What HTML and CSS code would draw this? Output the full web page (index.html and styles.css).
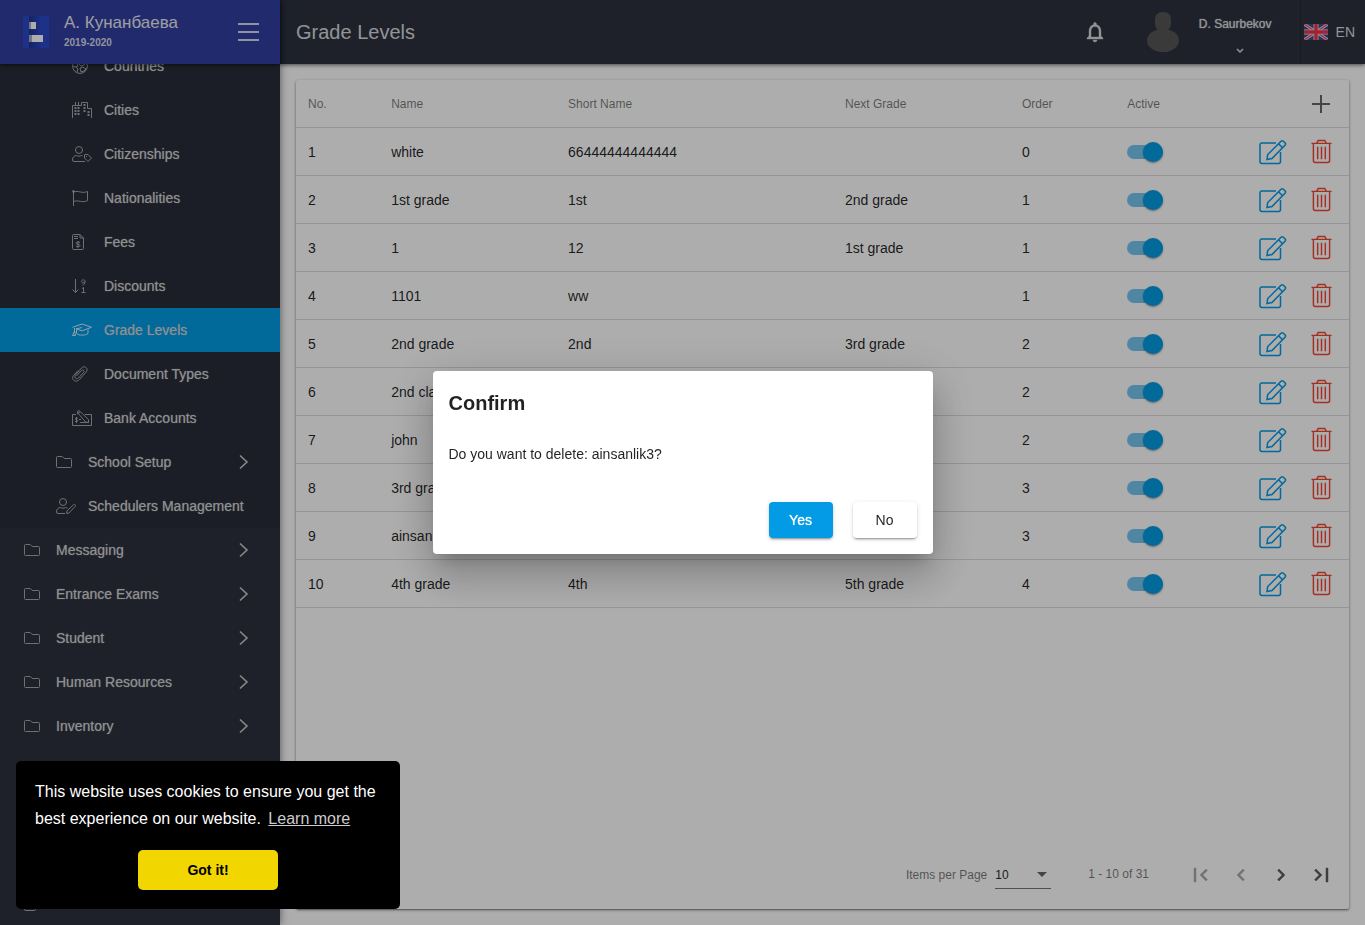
FILE: index.html
```html
<!DOCTYPE html>
<html lang="en">
<head>
<meta charset="utf-8">
<title>Grade Levels</title>
<link rel="stylesheet" href="styles.css">
</head>
<body>
<svg class="sprite" aria-hidden="true">
  <symbol id="folder" viewBox="0 0 20 16"><path d="M1.500 2.500h4.700l2 2h6.300q1 0 1 1v7q0 1-1 1h-13q-1 0-1-1v-9q0-1 1-1z"/></symbol>
  <symbol id="chev" viewBox="0 0 10 16"><path d="M1 1.500 8 8 1 14.500"/></symbol>
  <symbol id="globe" viewBox="0 0 20 16"><circle cx="8" cy="8" r="7.400"/><path d="M2 4l3 1 1 3-3 1-2-1M9 1l1 3-3 2 2 2 3-1 2-3M8 10l3-1 3 2-2 2-3 1zM4 9l2 2-1 3"/></symbol>
  <symbol id="city" viewBox="0 0 20 16"><path d="M.5 16V3.500H9.500V.5h6V6.500h4V16M3.500 3.500V0M6.500 3.500V0"/><path class="dots" d="M3.500 5v9M6.500 5v9M12.500 2v9M16.500 9v5"/></symbol>
  <symbol id="citizen" viewBox="0 0 20 16"><circle cx="7" cy="4" r="3.500"/><path d="M13 15.500H2q-1.500 0-1.500-1.500c0-3 2-4.500 4-4.500 2 1 3 1 5 0l1 .2M12.500 9q0-.5.5-.5h3l3.400 3.500-3.400 3.500-3.500-3.500zM14.500 10v1"/></symbol>
  <symbol id="flag" viewBox="0 0 20 16"><path d="M1.500 0v16M1.500 2c5-2 8 2 14-.5v9c-5 3-9-1-14 1"/><circle cx="1.500" cy="1.500" r="1"/></symbol>
  <symbol id="fee" viewBox="0 0 20 16"><path d="M1.500.5h6.500l3.500 3.500v10.500q0 1-1 1h-9q-1 0-1-1v-13q0-1 1-1zM8 .5V4h3.500M2 2.500h4M2 4.500h4M8 8.500c-1-1-4-.6-4 .6 0 1.600 4 .8 4 2.500 0 1.200-3 1.300-4.200.4M6 7v7"/></symbol>
  <symbol id="discount" viewBox="0 0 20 16"><path d="M3.500 1v13.500M.5 11.500l3 3 3-3M9.500 14.500h4M11.500 14.500v-5l-1.500 1M13 3.500c0 1.500-3.500 2-3.500 0s3.500-2.500 3.500 0-1 3-2.500 3.500"/></symbol>
  <symbol id="grad" viewBox="0 0 20 16"><path d="M.5 5.300 10 2l9.500 3.300L10 8.800 4 6.800l6-1.200M2.500 6v3M4.500 7.500v4c2 2.200 9 2.200 11.500 0v-4M2.500 9l1 4.500h-3z"/></symbol>
  <symbol id="clip" viewBox="0 0 20 16"><path d="M4.500 10 9.500 4.500c1.500-1.500 3.500.5 2 2L6.500 12c-2 2-5-.5-3-3L9.500 2c3-3 7.500.5 4.800 3.800L7.500 13.500c-3.500 4-9 0-6-4L6 4.500"/></symbol>
  <symbol id="bank" viewBox="0 0 20 16"><path d="M4 4.500H.5v11h19v-11H13M5 2l2-1.500 9.500 9v3l-3-.5zM5 4l3-2M4.500 7v6M6 8.500c-1-1-3-.4-2.500.8l2 1c1 1-1 2-2.500 1M8 12.500h9M7 9.500h2"/></symbol>
  <symbol id="edituser" viewBox="0 0 20 16"><circle cx="7" cy="4" r="3.500"/><path d="M9 15.500H2q-1.500 0-1.500-1.500c0-3 2-4.500 4-4.500 2 1 3 1 5 0l2 .8M10.500 15.500l.5-2.500 6.500-6.300q1-.8 1.700 0t0 1.700L13 15z"/></symbol>
  <symbol id="doc" viewBox="0 0 20 16"><rect x=".5" y=".5" width="11" height="15" rx="1"/></symbol>
  <symbol id="edit" viewBox="0 0 28 26"><path d="M17 4H3Q1 4 1 6v16.500q0 2 2 2h16.500q2 0 2-2V13M8 20.500l.7-5L22 2.300q1.200-1.200 2.400 0l1.600 1.600q1.200 1.200 0 2.400L13 19.500zM19.500 4.800l4 4"/></symbol>
  <symbol id="trash" viewBox="0 0 22 26"><path d="M.5 4.500h21M6 4.500l1.500-3h7l1.500 3M2.500 4.500v18q0 2 2 2h13q2 0 2-2v-18M7 8v13M11 8v13M15 8v13"/></symbol>
</svg>

<div class="app">
  <aside class="sidebar">
    <header class="brand">
      <svg class="logo" viewBox="0 0 26 32" aria-hidden="true"><defs><linearGradient id="lg"><stop offset="0" stop-color="#1d3690"/><stop offset="1" stop-color="#2a48c8"/></linearGradient></defs><path fill="#2b49ca" d="M0 0h26v32H0z"/><path fill="url(#lg)" d="M6 0h12v32H6z"/><path fill="#fff" d="M6 6h7v7H6zM6 19h14v7H6z"/><path fill="#a7adc0" d="M6 6h2v7H6zM6 19h3v7H6z"/></svg>
      <div class="brand-text"><span class="school">А. Кунанбаева</span><span class="year">2019-2020</span></div>
      <button class="plain burger" aria-label="Toggle menu"><span></span><span></span><span></span></button>
    </header>
    <nav class="nav">
      <div class="group">
        <a href="#" class="item deep"><svg><use href="#globe"/></svg>Countries</a>
        <a href="#" class="item deep"><svg><use href="#city"/></svg>Cities</a>
        <a href="#" class="item deep"><svg><use href="#citizen"/></svg>Citizenships</a>
        <a href="#" class="item deep"><svg><use href="#flag"/></svg>Nationalities</a>
        <a href="#" class="item deep"><svg><use href="#fee"/></svg>Fees</a>
        <a href="#" class="item deep"><svg><use href="#discount"/></svg>Discounts</a>
        <a href="#" class="item deep active"><svg><use href="#grad"/></svg>Grade Levels</a>
        <a href="#" class="item deep"><svg><use href="#clip"/></svg>Document Types</a>
        <a href="#" class="item deep"><svg><use href="#bank"/></svg>Bank Accounts</a>
        <a href="#" class="item mid"><svg><use href="#folder"/></svg>School Setup<svg class="chev"><use href="#chev"/></svg></a>
        <a href="#" class="item mid"><svg><use href="#edituser"/></svg>Schedulers Management</a>
      </div>
      <a href="#" class="item"><svg><use href="#folder"/></svg>Messaging<svg class="chev"><use href="#chev"/></svg></a>
      <a href="#" class="item"><svg><use href="#folder"/></svg>Entrance Exams<svg class="chev"><use href="#chev"/></svg></a>
      <a href="#" class="item"><svg><use href="#folder"/></svg>Student<svg class="chev"><use href="#chev"/></svg></a>
      <a href="#" class="item"><svg><use href="#folder"/></svg>Human Resources<svg class="chev"><use href="#chev"/></svg></a>
      <a href="#" class="item"><svg><use href="#folder"/></svg>Inventory<svg class="chev"><use href="#chev"/></svg></a>
      <a href="#" class="item last" aria-label="Documents"><svg><use href="#doc"/></svg></a>
    </nav>
  </aside>

  <div class="main">
    <header class="toolbar">
      <h1>Grade Levels</h1>
      <button class="plain bell" aria-label="Notifications"><svg viewBox="0 0 24 24"><path fill="currentColor" stroke="currentColor" stroke-width=".4" d="M12 22c1.100 0 2-.9 2-2h-4c0 1.100.9 2 2 2zm6-6v-5c0-3.070-1.630-5.640-4.500-6.320V4c0-.83-.67-1.500-1.500-1.500s-1.500.67-1.500 1.500v.68C7.640 5.360 6 7.920 6 11v5l-2 2v1h16v-1l-2-2zm-2 1H8v-6c0-2.480 1.510-4.500 4-4.500s4 2.020 4 4.500v6z"/></svg></button>
      <button class="plain user">
        <svg class="avatar" viewBox="0 0 32 40"><rect x="8" y="0" width="16" height="19" rx="7"/><ellipse cx="16" cy="28.500" rx="16" ry="11.500"/></svg>
        <span class="user-name">D. Saurbekov<svg class="down" viewBox="0 0 8 5"><path d="M1 1l3 3 3-3"/></svg></span>
      </button>
      <button class="plain lang">
        <svg viewBox="0 0 24 16"><path fill="#3c4791" d="M0 0h24v16H0z"/><path stroke="#e8e3ee" stroke-width="3" d="M0 0l24 16M24 0 0 16"/><path stroke="#e0465a" stroke-width="1.400" d="M0 0l24 16M24 0 0 16"/><path stroke="#f0d0d8" stroke-width="5" d="M12 0v16M0 8h24"/><path stroke="#e8364c" stroke-width="3.400" d="M12 0v16M0 8h24"/></svg>EN</button>
    </header>
    <main class="content">
      <section class="card">
        <table>
          <colgroup><col class="c-no"><col class="c-name"><col class="c-short"><col class="c-next"><col class="c-order"><col class="c-active"><col></colgroup>
          <thead><tr><th>No.</th><th>Name</th><th>Short Name</th><th>Next Grade</th><th>Order</th><th>Active</th><th><div class="acts"><button class="plain add" aria-label="Add"><svg viewBox="0 0 18 18"><path d="M9 0v18M0 9h18"/></svg></button></div></th></tr></thead>
          <tbody>
            <tr><td>1</td><td>white</td><td>66444444444444</td><td></td><td>0</td><td><input class="toggle" type="checkbox" checked aria-label="Active"></td><td><div class="acts"><button class="plain edit" aria-label="Edit"><svg><use href="#edit"/></svg></button><button class="plain trash" aria-label="Delete"><svg><use href="#trash"/></svg></button></div></td></tr>
            <tr><td>2</td><td>1st grade</td><td>1st</td><td>2nd grade</td><td>1</td><td><input class="toggle" type="checkbox" checked aria-label="Active"></td><td><div class="acts"><button class="plain edit" aria-label="Edit"><svg><use href="#edit"/></svg></button><button class="plain trash" aria-label="Delete"><svg><use href="#trash"/></svg></button></div></td></tr>
            <tr><td>3</td><td>1</td><td>12</td><td>1st grade</td><td>1</td><td><input class="toggle" type="checkbox" checked aria-label="Active"></td><td><div class="acts"><button class="plain edit" aria-label="Edit"><svg><use href="#edit"/></svg></button><button class="plain trash" aria-label="Delete"><svg><use href="#trash"/></svg></button></div></td></tr>
            <tr><td>4</td><td>1101</td><td>ww</td><td></td><td>1</td><td><input class="toggle" type="checkbox" checked aria-label="Active"></td><td><div class="acts"><button class="plain edit" aria-label="Edit"><svg><use href="#edit"/></svg></button><button class="plain trash" aria-label="Delete"><svg><use href="#trash"/></svg></button></div></td></tr>
            <tr><td>5</td><td>2nd grade</td><td>2nd</td><td>3rd grade</td><td>2</td><td><input class="toggle" type="checkbox" checked aria-label="Active"></td><td><div class="acts"><button class="plain edit" aria-label="Edit"><svg><use href="#edit"/></svg></button><button class="plain trash" aria-label="Delete"><svg><use href="#trash"/></svg></button></div></td></tr>
            <tr><td>6</td><td>2nd class</td><td></td><td></td><td>2</td><td><input class="toggle" type="checkbox" checked aria-label="Active"></td><td><div class="acts"><button class="plain edit" aria-label="Edit"><svg><use href="#edit"/></svg></button><button class="plain trash" aria-label="Delete"><svg><use href="#trash"/></svg></button></div></td></tr>
            <tr><td>7</td><td>john</td><td></td><td></td><td>2</td><td><input class="toggle" type="checkbox" checked aria-label="Active"></td><td><div class="acts"><button class="plain edit" aria-label="Edit"><svg><use href="#edit"/></svg></button><button class="plain trash" aria-label="Delete"><svg><use href="#trash"/></svg></button></div></td></tr>
            <tr><td>8</td><td>3rd grade</td><td></td><td></td><td>3</td><td><input class="toggle" type="checkbox" checked aria-label="Active"></td><td><div class="acts"><button class="plain edit" aria-label="Edit"><svg><use href="#edit"/></svg></button><button class="plain trash" aria-label="Delete"><svg><use href="#trash"/></svg></button></div></td></tr>
            <tr><td>9</td><td>ainsanlik3</td><td></td><td></td><td>3</td><td><input class="toggle" type="checkbox" checked aria-label="Active"></td><td><div class="acts"><button class="plain edit" aria-label="Edit"><svg><use href="#edit"/></svg></button><button class="plain trash" aria-label="Delete"><svg><use href="#trash"/></svg></button></div></td></tr>
            <tr><td>10</td><td>4th grade</td><td>4th</td><td>5th grade</td><td>4</td><td><input class="toggle" type="checkbox" checked aria-label="Active"></td><td><div class="acts"><button class="plain edit" aria-label="Edit"><svg><use href="#edit"/></svg></button><button class="plain trash" aria-label="Delete"><svg><use href="#trash"/></svg></button></div></td></tr>
          </tbody>
        </table>
        <footer class="pager">
          <label for="size">Items per Page</label>
          <span class="select"><select id="size"><option>10</option></select><svg viewBox="0 0 10 5"><path fill="currentColor" d="M0 0h10L5 5z"/></svg></span>
          <span class="range">1 - 10 of 31</span>
          <button class="plain page" disabled aria-label="First page"><svg viewBox="0 0 24 24"><path fill="currentColor" d="M18.410 16.590 13.820 12l4.590-4.590L17 6l-6 6 6 6zM5 5h2v14H5z"/></svg></button>
          <button class="plain page" disabled aria-label="Previous page"><svg viewBox="0 0 24 24"><path fill="currentColor" d="M15.410 7.410 14 6l-6 6 6 6 1.410-1.410L10.830 12z"/></svg></button>
          <button class="plain page" aria-label="Next page"><svg viewBox="0 0 24 24"><path fill="currentColor" d="M10 6 8.590 7.410 13.170 12l-4.580 4.590L10 18l6-6z"/></svg></button>
          <button class="plain page" aria-label="Last page"><svg viewBox="0 0 24 24"><path fill="currentColor" d="M5.590 7.410 10.180 12l-4.590 4.590L7 18l6-6-6-6zM17 5h2v14h-2z"/></svg></button>
        </footer>
      </section>
    </main>
  </div>
</div>

<div class="overlay">
  <section class="dialog" role="dialog" aria-labelledby="dlg-title">
    <h2 id="dlg-title">Confirm</h2>
    <p>Do you want to delete: ainsanlik3?</p>
    <div class="dialog-actions"><button class="btn primary">Yes</button><button class="btn">No</button></div>
  </section>
</div>

<aside class="cookie" aria-label="Cookie consent">
  <p>This website uses cookies to ensure you get the best experience on our website. <a href="#">Learn more</a></p>
  <button class="got">Got it!</button>
</aside>
</body>
</html>
```
FILE: styles.css
```css
* { box-sizing: border-box; }
body { margin: 0; font: 14px/20px "Liberation Sans", Arial, sans-serif; color: rgba(0, 0, 0, .87); background: #fff; }
svg { fill: none; flex: none; display: block; }
.sprite { position: absolute; width: 0; height: 0; }
.plain { border: 0; padding: 0; background: none; color: inherit; font: inherit; display: flex; align-items: center; justify-content: center; }
a { color: inherit; text-decoration: none; }

.app { display: flex; height: 100vh; }

/* sidebar */
.sidebar { width: 280px; flex: none; display: flex; flex-direction: column; background: #2d323e; color: #d4d5d6; box-shadow: 0 0 8px rgba(0, 0, 0, .5); z-index: 2; }
.brand { height: 64px; flex: none; display: flex; align-items: center; padding: 0 21px 0 23px; background: #303f9f; color: #fff; z-index: 1; box-shadow: 0 1px 4px rgba(0, 0, 0, .6); }
.logo { width: 26px; height: 32px; }
.brand-text { display: flex; flex-direction: column; gap: 4px; flex: 1; padding-left: 15px; color: #e8e8f2; }
.school { font-size: 17px; line-height: 18px; }
.year { font-size: 10px; line-height: 14px; font-weight: bold; color: #d5d8ec; }
.burger { flex-direction: column; gap: 6px; }
.burger span { width: 21px; height: 2px; background: #d6d9ec; }
.nav { flex: 1; min-height: 0; overflow: hidden; display: flex; flex-direction: column; text-shadow: 0 0 1px rgba(212, 213, 214, .6); }
.group { margin-top: -20px; background: #292d38; flex: none; }
.item { height: 44px; flex: none; display: flex; align-items: center; padding: 0 31px 0 24px; gap: 12px; }
.item svg { width: 20px; height: 16px; stroke: #a4a6aa; }
.item .chev { width: 10px; margin-left: auto; stroke: #cfcfcf; stroke-width: 1.500; }
.item .dots, .dots { stroke-width: 2; stroke-dasharray: 2 1; }
.mid { padding-left: 56px; }
.deep { padding-left: 72px; }
.active { background: #039be5; }
.active svg { stroke: #d7eefa; }
.last { margin-top: auto; }

/* top bar */
.main { flex: 1; min-width: 0; display: flex; flex-direction: column; }
.toolbar { height: 64px; flex: none; display: flex; align-items: center; padding-left: 16px; background: #2d323e; color: #d8dade; box-shadow: 0 1px 4px rgba(0, 0, 0, .6); z-index: 1; }
h1 { flex: 1; margin: 0; font-size: 20px; line-height: 24px; font-weight: normal; }
.bell svg { width: 24px; height: 24px; }
.user { gap: 20px; height: 64px; margin-left: 40px; padding-right: 28px; }
.avatar { width: 32px; height: 40px; fill: #565656; }
.user-name { display: flex; flex-direction: column; align-items: center; gap: 16px; padding-top: 4px; font-size: 12px; line-height: 16px; text-shadow: 0 0 1px currentColor; }
.down { width: 8px; height: 5px; stroke: currentColor; stroke-width: 1.500; margin-left: 10px; }
.lang { height: 64px; padding: 0 10px 0 3px; gap: 8px; border-left: 1px solid #242832; }
.lang svg { width: 24px; height: 16px; }

/* table card */
.content { flex: 1; min-height: 0; padding: 16px; display: flex; }
.card { flex: 1; display: flex; flex-direction: column; background: #fff; border-radius: 2px; box-shadow: 0 1px 3px rgba(0, 0, 0, .45), 0 1px 1px rgba(0, 0, 0, .2); }
table { width: 100%; table-layout: fixed; border-collapse: separate; border-spacing: 0; }
.c-no { width: 7.900%; }
.c-name { width: 16.800%; }
.c-short { width: 26.300%; }
.c-next { width: 16.800%; }
.c-order { width: 10%; }
.c-active { width: 12%; }
th, td { height: 48px; padding: 0 12px; text-align: left; border-bottom: 1px solid #dcdcdc; white-space: nowrap; }
th { font-size: 12px; line-height: 18px; font-weight: normal; color: rgba(0, 0, 0, .54); }
th:last-child, td:last-child { padding: 0 17px 0 0; }
.acts { display: flex; justify-content: flex-end; align-items: center; gap: 24px; }
.edit { color: #039be5; }
.edit svg { width: 28px; height: 26px; stroke: currentColor; stroke-width: 1.500; }
.trash { color: #f44336; }
.trash svg { width: 21px; height: 25px; stroke: currentColor; stroke-width: 1.500; }
.add svg { width: 18px; height: 18px; stroke: #666; stroke-width: 2; margin-right: 2px; }
.toggle { appearance: none; display: block; width: 36px; height: 14px; margin: 0; background: #75c7f1; border-radius: 7px; position: relative; }
.toggle::before { content: ""; position: absolute; right: 0; top: -3px; width: 20px; height: 20px; border-radius: 50%; background: #039be5; box-shadow: 0 1px 2px rgba(0, 0, 0, .4); }

.pager { margin-top: auto; height: 68px; display: flex; align-items: center; justify-content: flex-end; padding-right: 8px; font-size: 12px; color: rgba(0, 0, 0, .54); }
.select { display: flex; align-items: center; width: 56px; height: 28px; margin: 0 37px 0 8px; padding-right: 4px; border-bottom: 1px solid #777; }
.select select { appearance: none; flex: 1; min-width: 0; border: 0; padding: 0; background: none; font: inherit; color: rgba(0, 0, 0, .87); }
.select svg { width: 10px; height: 5px; color: #666; }
.range { margin-right: 32px; line-height: 20px; padding-bottom: 3px; }
.page { width: 40px; height: 40px; color: #5c5c5c; }
.page:disabled { color: #a8a8a8; }
.page svg { width: 24px; height: 24px; stroke: currentColor; stroke-width: .5; }

/* dialog */
.overlay { position: fixed; inset: 0; z-index: 10; display: flex; align-items: center; justify-content: center; background: rgba(0, 0, 0, .32); }
.dialog { width: 500px; max-width: 90vw; padding: 16px; border-radius: 4px; background: #fff; box-shadow: 0 11px 15px -7px rgba(0, 0, 0, .2), 0 24px 38px 3px rgba(0, 0, 0, .14), 0 9px 46px 8px rgba(0, 0, 0, .12); }
h2 { margin: 0 0 25px; font-size: 20px; line-height: 32px; }
.dialog p { margin: 0 0 38px; }
.dialog-actions { display: flex; justify-content: flex-end; gap: 20px; }
.btn { width: 64px; height: 36px; border: 0; border-radius: 4px; background: #fff; font: inherit; color: inherit; box-shadow: 0 3px 1px -2px rgba(0, 0, 0, .2), 0 2px 2px rgba(0, 0, 0, .14), 0 1px 5px rgba(0, 0, 0, .12); }
.primary { background: #039be5; color: #fff; text-shadow: 0 0 1px #fff; }

/* cookie notice */
.cookie { position: fixed; left: 16px; bottom: 16px; z-index: 20; width: 384px; padding: 17px 19px 19px; border-radius: 5px; background: #000; color: #fff; font-size: 16px; line-height: 27px; }
.cookie p { margin: 0 0 18px; }
.cookie a { margin-left: 3px; color: #ccc; text-decoration: underline; }
.got { display: block; width: 140px; height: 40px; margin: 0 auto; border: 0; border-radius: 5px; background: #f1d600; color: #000; font: bold 14px "Liberation Sans", Arial, sans-serif; }
```
